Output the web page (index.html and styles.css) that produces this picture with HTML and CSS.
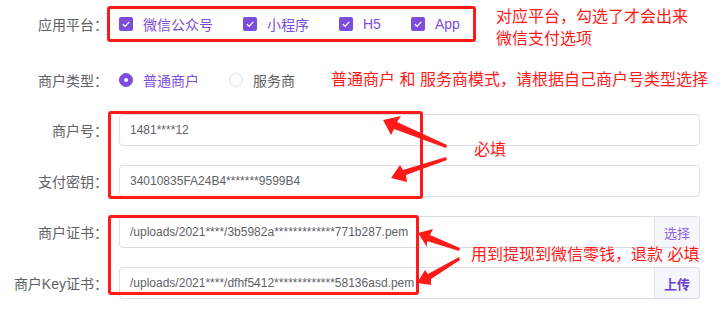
FILE: index.html
```html
<!DOCTYPE html>
<html lang="zh-CN">
<head>
    <meta charset="UTF-8">
    <meta name="viewport" content="width=device-width, initial-scale=1.0">
    <title>微信支付配置</title>
    <link rel="stylesheet" href="styles.css">
</head>
<body>

    <div class="page">
        <form class="pay-form">
            <div class="form-item item-platform">
                <label class="form-label">应用平台：</label>
                <div class="form-content">
                    <label class="checkbox is-checked">
                        <span class="checkbox-box"><svg width="14" height="14" viewBox="0 0 14 14"><polyline points="3.8,7.2 6.1,9.4 10.3,4.9" fill="none" stroke="#fff" stroke-width="1.3"/></svg></span>
                        <span class="checkbox-text">微信公众号</span>
                    </label>
                    <label class="checkbox is-checked">
                        <span class="checkbox-box"><svg width="14" height="14" viewBox="0 0 14 14"><polyline points="3.8,7.2 6.1,9.4 10.3,4.9" fill="none" stroke="#fff" stroke-width="1.3"/></svg></span>
                        <span class="checkbox-text">小程序</span>
                    </label>
                    <label class="checkbox is-checked">
                        <span class="checkbox-box"><svg width="14" height="14" viewBox="0 0 14 14"><polyline points="3.8,7.2 6.1,9.4 10.3,4.9" fill="none" stroke="#fff" stroke-width="1.3"/></svg></span>
                        <span class="checkbox-text">H5</span>
                    </label>
                    <label class="checkbox is-checked">
                        <span class="checkbox-box"><svg width="14" height="14" viewBox="0 0 14 14"><polyline points="3.8,7.2 6.1,9.4 10.3,4.9" fill="none" stroke="#fff" stroke-width="1.3"/></svg></span>
                        <span class="checkbox-text">App</span>
                    </label>
                </div>
            </div>

            <div class="form-item item-type">
                <label class="form-label">商户类型：</label>
                <div class="form-content">
                    <label class="radio is-checked">
                        <span class="radio-dot"></span>
                        <span class="radio-text">普通商户</span>
                    </label>
                    <label class="radio">
                        <span class="radio-dot"></span>
                        <span class="radio-text">服务商</span>
                    </label>
                </div>
            </div>

            <div class="form-item">
                <label class="form-label">商户号：</label>
                <div class="form-content">
                    <input class="text-input" type="text" value="1481****12" readonly>
                </div>
            </div>

            <div class="form-item">
                <label class="form-label">支付密钥：</label>
                <div class="form-content">
                    <input class="text-input" type="text" value="34010835FA24B4*******9599B4" readonly>
                </div>
            </div>

            <div class="form-item">
                <label class="form-label">商户证书：</label>
                <div class="form-content">
                    <div class="input-group">
                        <input class="text-input" type="text" value="/uploads/2021****/3b5982a*************771b287.pem" readonly>
                        <span class="input-append">选择</span>
                    </div>
                </div>
            </div>

            <div class="form-item">
                <label class="form-label">商户Key证书：</label>
                <div class="form-content">
                    <div class="input-group">
                        <input class="text-input" type="text" value="/uploads/2021****/dfhf5412*************58136asd.pem" readonly>
                        <span class="input-append append-bold">上传</span>
                    </div>
                </div>
            </div>
        </form>

        <!-- red notes drawn over the form -->
        <div class="mark mark-platform"></div>
        <div class="mark mark-keys"></div>
        <div class="mark mark-certs"></div>

        <p class="note note-platform">对应平台，勾选了才会出来<br>微信支付选项</p>
        <p class="note note-type">普通商户 和 服务商模式，请根据自己商户号类型选择</p>
        <p class="note note-required">必填</p>
        <p class="note note-certs">用到提现到微信零钱，退款 必填</p>

        <svg class="arrows" width="726" height="328" viewBox="0 0 726 328">
            <polygon points="383,120 401,116 397,122 447,145 446,148 394,129 391,135" fill="#ff1a1a"/>
            <polygon points="391,178 400,165 403,170 446,157 447,160 406,175 407,182" fill="#ff1a1a"/>
            <polygon points="418,233 433,229 430,235 460,248 459,251 427,241 427,247" fill="#ff1a1a"/>
            <polygon points="417,283 425,270 428,274 459,257 460,260 431,279 431,285" fill="#ff1a1a"/>
        </svg>
    </div>

</body>
</html>
```

FILE: styles.css
```css
body {
    margin: 0;
    background: #fff;
    font-family: "Liberation Sans", "Noto Sans CJK SC", sans-serif;
    font-size: 14px;
    color: #606266;
}
.page {
    position: relative;
    width: 726px;
    height: 328px;
    overflow: hidden;
}
.pay-form {
    padding-top: 8px;
}
.form-item {
    display: flex;
    align-items: center;
    height: 32px;
    margin-bottom: 19px;
}
.item-platform {
    margin-bottom: 24px;
}
.item-type {
    margin-bottom: 18px;
}
.form-label {
    width: 108px;
    padding-right: 11px;
    text-align: right;
    white-space: nowrap;
}
.form-content {
    width: 581px;
    display: flex;
    align-items: center;
}
/* Checkbox / Radio */
.checkbox,
.radio {
    display: flex;
    align-items: center;
    margin-right: 30px;
    white-space: nowrap;
}
.checkbox-box {
    width: 14px;
    height: 14px;
    border-radius: 2px;
    background-color: #7c4ddc;
    display: flex;
}
.checkbox-text,
.radio-text {
    padding-left: 10px;
}
.is-checked .checkbox-text,
.is-checked .radio-text {
    color: #7c4ddc;
}
.radio-dot {
    width: 14px;
    height: 14px;
    box-sizing: border-box;
    border-radius: 50%;
    border: 1px solid #dcdfe6;
    background-color: #fff;
    position: relative;
}
.radio.is-checked .radio-dot {
    border-color: #7c4ddc;
    background-color: #7c4ddc;
}
.radio.is-checked .radio-dot::after {
    content: "";
    position: absolute;
    left: 4px;
    top: 4px;
    width: 4px;
    height: 4px;
    border-radius: 50%;
    background-color: #fff;
}
/* Inputs */
.text-input {
    width: 100%;
    height: 32px;
    box-sizing: border-box;
    padding: 0 10px;
    border: 1px solid #dcdfe6;
    border-radius: 4px;
    font-family: "Liberation Sans", "Noto Sans CJK SC", sans-serif;
    font-size: 12px;
    color: #606266;
    background: #fff;
    outline: none;
}
.input-group {
    display: flex;
    width: 100%;
}
.input-group .text-input {
    flex: 1;
    border-radius: 4px 0 0 4px;
}
.input-append {
    width: 45px;
    height: 32px;
    box-sizing: border-box;
    display: flex;
    align-items: center;
    justify-content: center;
    border: 1px solid #dcdfe6;
    border-left: none;
    border-radius: 0 4px 4px 0;
    background-color: #f5f7fa;
    color: #8a63e0;
    font-size: 13px;
}
.append-bold {
    color: #6a3fd0;
    font-weight: bold;
}
/* Red notes */
.mark {
    position: absolute;
    border: 3px solid #ff1a1a;
    border-radius: 3px;
    box-sizing: border-box;
}
.mark-platform {
    left: 107px;
    top: 6px;
    width: 369px;
    height: 36px;
}
.mark-keys {
    left: 108px;
    top: 111px;
    width: 315px;
    height: 88px;
}
.mark-certs {
    left: 108px;
    top: 215px;
    width: 311px;
    height: 80px;
}
.note {
    position: absolute;
    margin: 0;
    color: #ff1a1a;
    font-size: 16px;
    line-height: 22px;
    white-space: nowrap;
}
.note-platform {
    left: 496px;
    top: 6px;
}
.note-type {
    left: 331px;
    top: 69px;
}
.note-required {
    left: 474px;
    top: 139px;
}
.note-certs {
    left: 471px;
    top: 244px;
}
.arrows {
    position: absolute;
    left: 0;
    top: 0;
    pointer-events: none;
}
```
